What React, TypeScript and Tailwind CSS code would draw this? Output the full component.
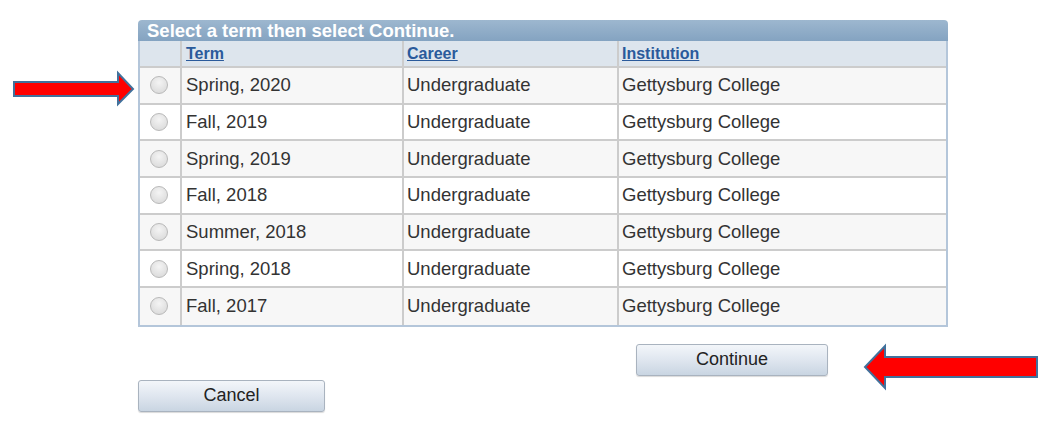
import React from "react";

const rows = [
  "Spring, 2020",
  "Fall, 2019",
  "Spring, 2019",
  "Fall, 2018",
  "Summer, 2018",
  "Spring, 2018",
  "Fall, 2017",
];

function Radio() {
  return (
    <span className="block w-[18px] h-[18px] rounded-full border border-[#b9b9b9] bg-[radial-gradient(circle_at_50%_35%,#f4f4f4,#d6d6d6)]" />
  );
}

export default function App() {
  return (
    <div
      className="relative w-[1064px] h-[438px] bg-white overflow-hidden"
      style={{ fontFamily: '"Liberation Sans", Arial, sans-serif' }}
    >
      <div className="pl-[138px] pt-[20px]">
        <div className="w-[810px]">
          <div className="h-[21px] rounded-t-[4px] bg-gradient-to-b from-[#9db7cf] to-[#84a3c1] pl-[9px] text-white font-bold text-[18.5px] leading-[21px]">
            Select a term then select Continue.
          </div>
          <div className="border-x-2 border-b-2 border-[#b4c6da]">
            <div className="grid grid-cols-[42px_222px_215px_1fr] h-[27px] bg-[#dde5ed] border-b-2 border-[#cccccc]">
              <div className="border-r-2 border-[#cccccc]" />
              <div className="border-r-2 border-[#cccccc] pl-[4px] text-[16px] leading-[25px] font-bold text-[#2a5a9b] underline">
                Term
              </div>
              <div className="border-r-2 border-[#cccccc] pl-[3px] text-[16px] leading-[25px] font-bold text-[#2a5a9b] underline">
                Career
              </div>
              <div className="pl-[3px] text-[16px] leading-[25px] font-bold text-[#2a5a9b] underline">
                Institution
              </div>
            </div>
            {rows.map((r, i) => (
              <div
                key={r}
                className={`grid grid-cols-[42px_222px_215px_1fr] h-[36.67px] ${
                  i < rows.length - 1 ? "border-b-2 border-[#cccccc]" : ""
                } ${i % 2 === 0 ? "bg-[#f7f7f7]" : "bg-white"} text-[18.5px] text-[#333333]`}
              >
                <div className="border-r-2 border-[#cccccc] flex items-center justify-center pr-[2px]">
                  <Radio />
                </div>
                <div className="border-r-2 border-[#cccccc] pl-[4px] flex items-center">{r}</div>
                <div className="border-r-2 border-[#cccccc] pl-[3px] flex items-center">Undergraduate</div>
                <div className="pl-[3px] flex items-center">Gettysburg College</div>
              </div>
            ))}
          </div>
        </div>
        <div className="pl-[498px] pt-[17px]">
          <button className="w-[192px] h-[32px] rounded-[3px] border border-[#a9b3bf] bg-gradient-to-b from-[#f3f6fa] via-[#dfe6ef] to-[#c9d5e2] text-[18px] text-[#222] shadow-[0_1px_1px_rgba(0,0,0,0.15)]">
            Continue
          </button>
        </div>
        <div className="pt-[4px]">
          <button className="w-[187px] h-[32px] rounded-[3px] border border-[#a9b3bf] bg-gradient-to-b from-[#f3f6fa] via-[#dfe6ef] to-[#c9d5e2] text-[18px] text-[#222] shadow-[0_1px_1px_rgba(0,0,0,0.15)]">
            Cancel
          </button>
        </div>
      </div>

      <svg className="absolute left-0 top-0" width="1064" height="438" viewBox="0 0 1064 438">
        <polygon
          points="14,82 118,82 118,73 133,89 118,104 118,96 14,96"
          fill="#ff0000"
          stroke="#41719c"
          strokeWidth="2"
          strokeLinejoin="miter"
        />
        <polygon
          points="1037,357 885,357 885,346 865,367 885,388 885,377 1037,377"
          fill="#ff0000"
          stroke="#41719c"
          strokeWidth="2"
          strokeLinejoin="miter"
        />
      </svg>
    </div>
  );
}
